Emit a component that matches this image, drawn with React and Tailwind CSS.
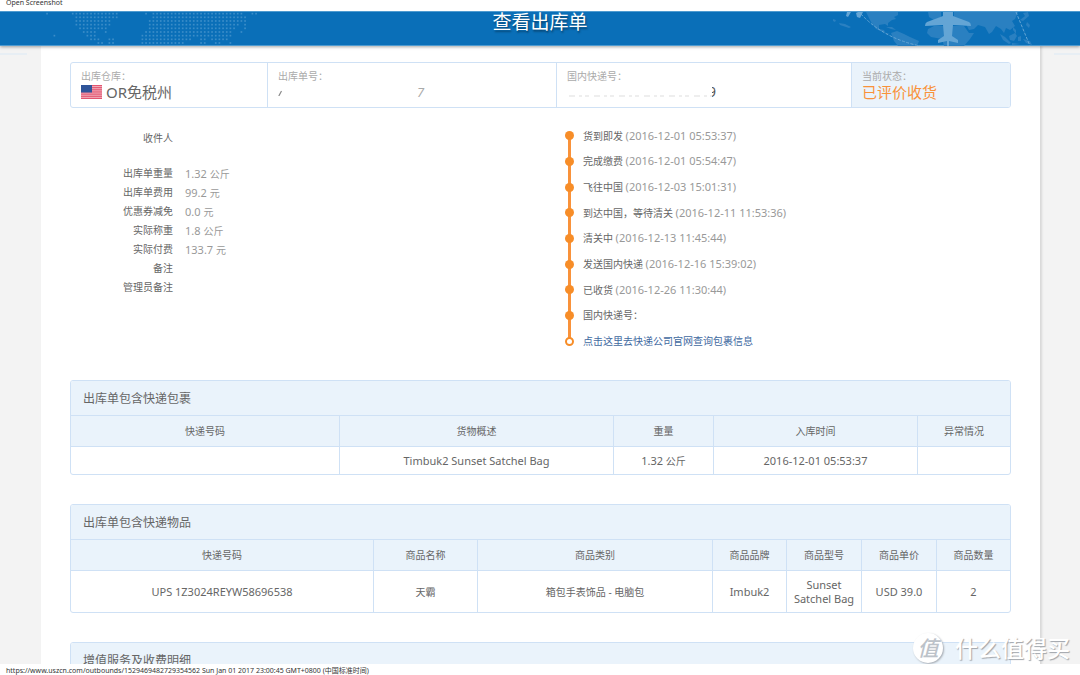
import React from 'react';

const SUMMARY_LABEL = 'text-[10px] leading-[14px] text-[#aaa]';

const DETAILS = [
  { label: '出库单重量', value: '1.32', unit: '公斤' },
  { label: '出库单费用', value: '99.2', unit: '元' },
  { label: '优惠券减免', value: '0.0', unit: '元' },
  { label: '实际称重', value: '1.8', unit: '公斤' },
  { label: '实际付费', value: '133.7', unit: '元' },
  { label: '备注' },
  { label: '管理员备注' },
];

const STEPS = [
  { text: '货到即发', time: '(2016-12-01 05:53:37)' },
  { text: '完成缴费', time: '(2016-12-01 05:54:47)' },
  { text: '飞往中国', time: '(2016-12-03 15:01:31)' },
  { text: '到达中国，等待清关', time: '(2016-12-11 11:53:36)' },
  { text: '清关中', time: '(2016-12-13 11:45:44)' },
  { text: '发送国内快递', time: '(2016-12-16 15:39:02)' },
  { text: '已收货', time: '(2016-12-26 11:30:44)' },
  { text: '国内快递号：' },
];

// each row lists [first, last] column of the dots that are lit
const DOT_ROWS = [
  [[0, 0], [7, 19], [27, 27], [29, 53], [56, 57]],
  [[8, 19], [29, 54]],
  [[8, 17], [28, 54]],
  [[8, 17], [28, 52], [54, 54]],
  [[9, 16], [28, 51], [54, 54]],
  [[10, 13], [16, 16], [27, 50], [53, 53]],
  [[2, 2], [11, 13], [26, 50]],
  [[12, 14], [17, 18], [26, 39], [42, 43], [45, 49]],
  [[14, 15], [17, 18], [26, 37], [42, 43], [46, 47], [50, 50]],
];

const DotMap = () => (
  <svg className="absolute top-0 left-10" width="230" height="34" viewBox="0 0 230 34" aria-hidden="true">
    {DOT_ROWS.map((ranges, row) =>
      ranges.map(([from, to]) =>
        Array.from({ length: to - from + 1 }, (_, i) => (
          <rect
            key={`${row}-${from + i}`}
            x={6.2 + (from + i) * 3.667}
            y={0.8 + row * 3.667}
            width="1.7"
            height="1.7"
            fill="#4b97cd"
            opacity="0.75"
          />
        ))
      )
    )}
  </svg>
);

const PlaneMap = () => (
  <svg className="absolute top-0 right-[35px]" width="220" height="34" viewBox="0 0 220 34" aria-hidden="true">
    <g fill="#2a80c1">
      <path d="M41 0 L73 0 L73 3 L69 5 L71 7 L67 8 L63 11 L63 14 L60 12 L54 13 L54 17 L59 18 L61 22 L65 22 L58 20 L51 17 L46 10 L43 4 Z" />
      <path d="M66 21 L72 19 L79 22 L85 25 L94 29 L92 34 L73 34 L69 29 Z" />
      <path d="M61 15 L67 15 L71 18 L66 17 Z" />
      <path d="M103 0 L116 0 L116 5 L109 8 L104 5 Z" />
      <path d="M103 17 L109 14 L139 14 L144 21 L149 21 L145 27 L139 34 L119 34 L117 27 L106 25 L102 21 Z" />
      <path d="M129 0 L193 0 L190 7 L187 9 L190 14 L185 18 L181 16 L179 21 L176 17 L171 14 L167 20 L164 22 L160 15 L153 13 L149 17 L144 18 L141 12 L134 9 L129 5 Z" />
      <path d="M198 1 L203 0 L204 4 L198 9 L195 8 L200 4 Z" />
      <path d="M175 22 L180 25 L186 31 L184 32 L178 28 Z" />
      <path d="M184 24 L190 21 L192 24 L189 29 L185 28 Z" />
      <path d="M188 15 L191 18 L191 22 L188 18 Z M193 25 L196 24 L196 29 L193 29 Z M198 27 L205 29 L207 33 L201 31 Z M187 31 L195 32 L187 33 Z" />
      <path d="M8 7 L11 8 L10 10 L8 9 Z M14 11 L20 12 L26 15 L24 16 L15 13 Z M202 10 L205 13 L204 16 L201 13 Z" />
    </g>
    <g fill="#64a5d5">
      <path d="M22 0 L26 0 L23 5 L21 4 Z M33 0 L38 0 L35 6 L32 5 L31 1 Z" />
      <path d="M118 0 L128 0 L128 4 L144 10 Q146 11 146 14 L128 13 L127 24 L133 28 L133 31 L124 29 L124 34 L122 34 L122 29 L113 31 L113 28 L119 24 L118 13 L100 14 Q100 11 102 10 L118 4 Z" />
    </g>
    <g fill="none" stroke="#64a5d5" strokeWidth="1" strokeDasharray="3 1.5">
      <path d="M36 2 Q58 26 95 34" />
      <path d="M191 0 L205 34" />
    </g>
  </svg>
);

const UsFlag = () => (
  <svg className="h-[14px] w-[21px] shrink-0" viewBox="0 0 21 14" role="img" aria-label="US">
    <rect width="21" height="14" fill="#e25570" />
    {[1, 3, 5, 7, 9, 11].map((y) => (
      <rect key={y} y={y * 1.077} width="21" height="1" fill="#f3b2be" />
    ))}
    <rect width="11" height="7.5" fill="#2f5499" />
  </svg>
);

const SummaryBar = () => (
  <section className="mt-[16px] grid grid-cols-[197fr_289fr_295fr_158fr] divide-x divide-[#cfe1f5] overflow-hidden rounded-[3px] border border-[#cfe1f5]">
    <div className="h-[44px] px-[10px] pt-[6px]">
      <p className={SUMMARY_LABEL}>出库仓库：</p>
      <p className="flex items-center gap-1 text-[15px] leading-[18px] text-[#666]">
        <UsFlag />
        OR免税州
      </p>
    </div>
    <div className="px-[10px] pt-[6px]">
      <p className={SUMMARY_LABEL}>出库单号：</p>
      <p className="flex items-center text-[13px] leading-[18px] text-[#aaa] italic">
        <svg className="mr-[135px] h-2 w-1" viewBox="0 0 4 8" aria-hidden="true">
          <path d="M3.5 3 L0.8 8" stroke="#888" strokeWidth="1.2" />
        </svg>
        7
      </p>
    </div>
    <div className="px-[10px] pt-[6px]">
      <p className={SUMMARY_LABEL}>国内快递号：</p>
      <p className="flex items-center text-[14px] leading-[18px] text-[#555]">
        <svg className="mt-2 h-[2px] w-[145px]" viewBox="0 0 145 2" aria-hidden="true">
          <path d="M2 1 H145" stroke="#ddd" strokeWidth="1" strokeDasharray="6 4 3 3 4 5" />
        </svg>
        <span className="flex w-1 justify-end overflow-hidden">9</span>
      </p>
    </div>
    <div className="bg-[#eaf3fb] px-[10px] pt-[6px]">
      <p className={SUMMARY_LABEL}>当前状态：</p>
      <p className="text-[15px] leading-[18px] text-[#f9923a]">已评价收货</p>
    </div>
  </section>
);

const Details = () => (
  <div className="pt-[6px] text-[10px] leading-[19px] text-[#666]">
    <p className="w-[103px] pb-4 text-right">收件人</p>
    <dl className="grid auto-rows-[19px] grid-cols-[103px_1fr] gap-x-3">
      {DETAILS.map(({ label, value, unit }) => (
        <React.Fragment key={label}>
          <dt className="text-right">{label}</dt>
          <dd className="text-[#999]">
            {value && <span className="text-[11px]">{value} </span>}
            {unit}
          </dd>
        </React.Fragment>
      ))}
    </dl>
  </div>
);

const Timeline = () => (
  <div className="relative">
    <div className="absolute top-[13px] bottom-[13px] left-[3px] w-[3px] bg-[#f9923a]" />
    <ol className="grid h-[231px] auto-rows-fr text-[10px] text-[#666]">
      {STEPS.map(({ text, time }) => (
        <li key={text} className="relative flex items-center gap-[9px]">
          <span className="h-[9px] w-[9px] shrink-0 rounded-full bg-[#f78d28]" />
          <span>
            {text} {time && <span className="text-[11px] text-[#999]">{time}</span>}
          </span>
        </li>
      ))}
      <li className="relative flex items-center gap-[9px]">
        <span className="h-[9px] w-[9px] shrink-0 rounded-full border-2 border-[#f78d28] bg-white" />
        <a href="#track" className="text-[#41699f]">点击这里去快递公司官网查询包裹信息</a>
      </li>
    </ol>
  </div>
);

const Panel = ({ title, children }) => (
  <section className="overflow-hidden rounded-[3px] border border-[#cfe1f5]">
    <h2 className="bg-[#eaf3fb] px-[12px] pt-[2px] text-[12px] leading-[32px] text-[#666]">{title}</h2>
    {children}
  </section>
);

const TH = 'h-[32px] border-t border-r border-b border-[#cfe1f5] bg-[#eaf3fb] p-0 font-normal last:border-r-0';
const TD = 'border-r border-[#cfe1f5] p-0 text-[11px] leading-[14px] last:border-r-0';

const DataTable = ({ widths, heads, cells, rowClass }) => {
  const total = widths.reduce((sum, w) => sum + w, 0);

  return (
    <table className="w-full table-fixed border-separate border-spacing-0 text-center text-[10px] text-[#666]">
      <colgroup>
        {widths.map((w, i) => (
          <col key={i} style={{ width: `${(w / total) * 100}%` }} />
        ))}
      </colgroup>
      <thead>
        <tr>
          {heads.map((head) => (
            <th key={head} scope="col" className={TH}>{head}</th>
          ))}
        </tr>
      </thead>
      <tbody>
        <tr className={rowClass}>
          {cells.map((cell, i) => (
            <td key={i} className={TD}>{cell}</td>
          ))}
        </tr>
      </tbody>
    </table>
  );
};

const Watermark = () => (
  <div className="absolute right-[10px] bottom-0 flex items-center gap-[12px] text-white">
    <span className="flex h-[30px] w-[30px] items-center justify-center rounded-full bg-white text-[21px] leading-none font-medium text-[#bcc2c9] italic shadow-[1px_1px_2px_#a5abb2]">
      值
    </span>
    <span className="text-[23px] leading-[32px] font-medium [text-shadow:1px_1px_1px_#a0a5ab]">什么值得买</span>
  </div>
);

export default function App() {
  return (
    <div lang="zh-CN" className="flex h-screen flex-col overflow-hidden bg-white font-['Noto_Sans','Noto_Sans_CJK_SC',sans-serif]">
      <div className="flex h-[11px] shrink-0 items-end overflow-hidden px-[6px] pb-[3px] text-[7px] leading-[10px] text-[#333]">
        Open Screenshot
      </div>

      <div className="relative flex min-h-0 flex-1 flex-col overflow-hidden bg-[#f3f3f3]">
        <header className="relative z-10 h-[35px] shrink-0 border-y border-[#4f9bd0] bg-[#0a6fb8] shadow-[0_1px_3px_rgba(0,0,0,0.35)]">
          <DotMap />
          <PlaneMap />
          <h1 className="relative text-center text-[19px] leading-[20px] text-white [text-shadow:1px_2px_2px_rgba(0,0,0,0.4)]">
            查看出库单
          </h1>
        </header>

        <div className="flex flex-1">
          <div className="w-[41px] shrink-0 pt-[7px]">
            <div className="h-[2px] w-[27px] bg-[#e7eef4]" />
          </div>
          <main className="min-w-0 flex-1 bg-white px-[29px] shadow-[2px_0_2px_#d8d8d8]">
            <SummaryBar />
            <div className="mt-[15px] grid grid-cols-[495fr_446fr]">
              <Details />
              <Timeline />
            </div>
            <div className="mt-[26px] flex flex-col gap-[29px]">
              <Panel title="出库单包含快递包裹">
                <DataTable
                  widths={[269, 274, 100, 204, 92]}
                  heads={['快递号码', '货物概述', '重量', '入库时间', '异常情况']}
                  cells={[
                    '',
                    'Timbuk2 Sunset Satchel Bag',
                    <>1.32 <span className="text-[10px]">公斤</span></>,
                    '2016-12-01 05:53:37',
                    '',
                  ]}
                  rowClass="h-[27px]"
                />
              </Panel>
              <Panel title="出库单包含快递物品">
                <DataTable
                  widths={[303, 104, 235, 74, 75, 75, 73]}
                  heads={['快递号码', '商品名称', '商品类别', '商品品牌', '商品型号', '商品单价', '商品数量']}
                  cells={[
                    'UPS 1Z3024REYW58696538',
                    <span className="text-[10px]">天霸</span>,
                    <span className="text-[10px]">箱包手表饰品 - 电脑包</span>,
                    'Imbuk2',
                    <>Sunset<br />Satchel Bag</>,
                    'USD 39.0',
                    '2',
                  ]}
                  rowClass="h-[41px]"
                />
              </Panel>
              <Panel title="增值服务及收费明细" />
            </div>
          </main>
          <div className="w-[40px] shrink-0 pt-[7px] pl-[14px]">
            <div className="h-[2px] bg-[#e7eef4]" />
          </div>
        </div>
        <Watermark />
      </div>

      <footer className="h-[11px] shrink-0 px-[6px] text-[7px] leading-[13px] text-[#333]">
        https://www.uszcn.com/outbounds/1529469482729354562 Sun Jan 01 2017 23:00:45 GMT+0800 (中国标准时间)
      </footer>
    </div>
  );
}
